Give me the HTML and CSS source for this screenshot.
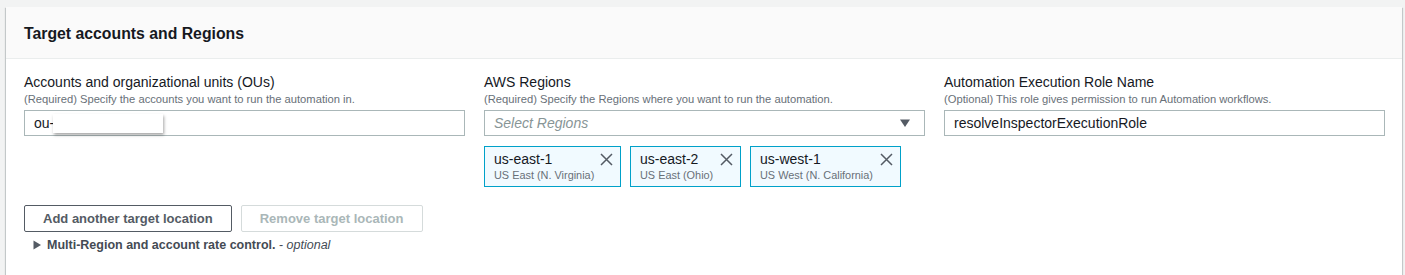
FILE: index.html
```html
<!DOCTYPE html>
<html lang="en">
<head>
<meta charset="utf-8">
<title>Target accounts and Regions</title>
<link rel="stylesheet" href="styles.css">
</head>
<body>
<section class="card">
  <header class="card-header">
    <h2 class="card-title">Target accounts and Regions</h2>
  </header>
  <div class="card-body">
    <div class="columns">
      <div class="field">
        <label class="field-label">Accounts and organizational units (OUs)</label>
        <div class="field-desc">(Required) Specify the accounts you want to run the automation in.</div>
        <div class="input-wrap">
          <div class="input">ou-</div>
          <div class="redact"></div>
        </div>
      </div>
      <div class="field">
        <label class="field-label">AWS Regions</label>
        <div class="field-desc">(Required) Specify the Regions where you want to run the automation.</div>
        <div class="input select">
          <span class="placeholder">Select Regions</span>
          <svg class="caret" width="12" height="12" viewBox="0 0 12 12"><path d="M1 2.5h10L6 10z" fill="#545b64"/></svg>
        </div>
        <div class="tokens">
          <div class="token">
            <div class="token-text">
              <div class="token-name">us-east-1</div>
              <div class="token-sub">US East (N. Virginia)</div>
            </div>
            <svg class="token-x" width="13" height="13" viewBox="0 0 13 13"><path d="M1 1l11 11M12 1L1 12" stroke="#545b64" stroke-width="1.5" fill="none"/></svg>
          </div>
          <div class="token">
            <div class="token-text">
              <div class="token-name">us-east-2</div>
              <div class="token-sub">US East (Ohio)</div>
            </div>
            <svg class="token-x" width="13" height="13" viewBox="0 0 13 13"><path d="M1 1l11 11M12 1L1 12" stroke="#545b64" stroke-width="1.5" fill="none"/></svg>
          </div>
          <div class="token">
            <div class="token-text">
              <div class="token-name">us-west-1</div>
              <div class="token-sub">US West (N. California)</div>
            </div>
            <svg class="token-x" width="13" height="13" viewBox="0 0 13 13"><path d="M1 1l11 11M12 1L1 12" stroke="#545b64" stroke-width="1.5" fill="none"/></svg>
          </div>
        </div>
      </div>
      <div class="field">
        <label class="field-label">Automation Execution Role Name</label>
        <div class="field-desc">(Optional) This role gives permission to run Automation workflows.</div>
        <div class="input">resolveInspectorExecutionRole</div>
      </div>
    </div>
    <div class="actions">
      <button class="btn">Add another target location</button>
      <button class="btn btn-disabled">Remove target location</button>
    </div>
    <div class="expander">
      <svg class="expander-icon" width="10" height="10" viewBox="0 0 10 10"><path d="M1.5 0.5L9 5 1.5 9.5z" fill="#545b64"/></svg>
      <span class="expander-title">Multi-Region and account rate control.</span>
      <span class="expander-opt"> - <em>optional</em></span>
    </div>
  </div>
</section>
</body>
</html>
```
FILE: styles.css
```css
html, body {
  margin: 0;
  padding: 0;
}
body {
  background: #f2f3f3;
  font-family: "Liberation Sans", Arial, sans-serif;
  color: #16191f;
  padding: 7px 3px 0 6px;
  height: 275px;
  box-sizing: border-box;
  overflow: hidden;
}
.card {
  background: #ffffff;
  box-shadow: 0 1px 1px 0 rgba(0, 28, 36, 0.3), 1px 1px 1px 0 rgba(0, 28, 36, 0.15), -1px 1px 1px 0 rgba(0, 28, 36, 0.15);
  height: 268px;
}
.card-header {
  background: #fafafa;
  border-bottom: 1px solid #eaeded;
  height: 52px;
  box-sizing: border-box;
  padding: 0 18px;
  display: flex;
  align-items: center;
}
.card-title {
  margin: 0;
  font-size: 15.8px;
  font-weight: 700;
  color: #16191f;
  padding-top: 2px;
}
.card-body {
  padding: 13px 17px 0 18px;
}
.columns {
  display: grid;
  grid-template-columns: 1fr 1fr 1fr;
  column-gap: 19px;
}
.field {
  display: flex;
  flex-direction: column;
}
.field-label {
  font-size: 14px;
  line-height: 20px;
  color: #16191f;
}
.field-desc {
  font-size: 11.2px;
  line-height: 14px;
  color: #687078;
  margin-bottom: 4px;
}
.input-wrap {
  position: relative;
}
.input {
  height: 26px;
  box-sizing: border-box;
  border: 1px solid #aab7b8;
  padding: 0 9px;
  font-size: 14px;
  line-height: 24px;
  color: #16191f;
  background: #fff;
}
.redact {
  position: absolute;
  left: 29px;
  top: 4px;
  width: 110px;
  height: 19px;
  background: #fff;
  box-shadow: 1px 2px 3px rgba(0, 0, 0, 0.35);
}
.select {
  display: flex;
  align-items: center;
  justify-content: space-between;
}
.placeholder {
  font-style: italic;
  color: #879596;
}
.caret {
  margin-right: 4px;
}
.tokens {
  display: flex;
  gap: 9px;
  margin-top: 10px;
}
.token {
  display: flex;
  align-items: flex-start;
  justify-content: space-between;
  gap: 4px;
  background: #f1faff;
  border: 1px solid #00a1c9;
  padding: 3px 7px 3px 9px;
  height: 41px;
  box-sizing: border-box;
}
.token-text {
  white-space: nowrap;
}
.token-name {
  font-size: 14px;
  line-height: 18px;
}
.token-sub {
  font-size: 10.9px;
  line-height: 15px;
  color: #687078;
}
.token-x {
  margin-top: 3px;
  flex-shrink: 0;
}
.token:nth-child(1) { width: 137px; }
.token:nth-child(2) { width: 111px; }
.token:nth-child(3) { width: 151px; }
.actions {
  display: flex;
  gap: 9px;
  margin-top: 18px;
}
.btn {
  height: 27px;
  box-sizing: border-box;
  background: #fff;
  border: 1px solid #545b64;
  border-radius: 2px;
  font-family: inherit;
  font-size: 13px;
  font-weight: 700;
  color: #545b64;
  padding: 0 18px;
}
.btn-disabled {
  border-color: #d5dbdb;
  color: #aab7b8;
}
.expander {
  display: flex;
  align-items: center;
  margin-top: 6px;
  padding-left: 8px;
  font-size: 12.5px;
  color: #444b54;
}
.expander-icon {
  margin-right: 5px;
}
.expander-title {
  font-weight: 700;
}
.expander-opt {
  white-space: pre;
}
```
